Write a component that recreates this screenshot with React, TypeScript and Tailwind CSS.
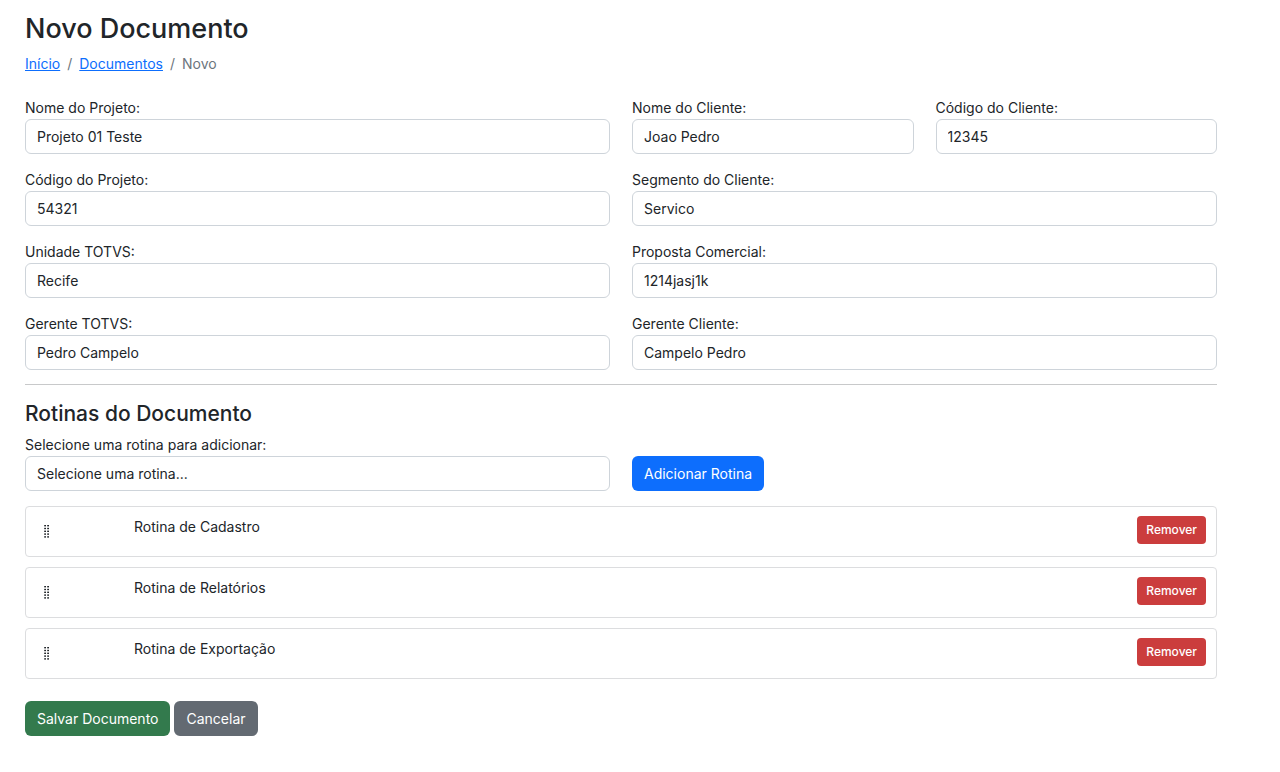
import React, { useState } from 'react';

type Field = {
  id: string;
  label: string;
  value: string;
  span: string;
};

type Routine = {
  id: number;
  name: string;
};

const fields: Field[] = [
  { id: 'projectName', label: 'Nome do Projeto:', value: 'Projeto 01 Teste', span: 'col-span-2' },
  { id: 'clientName', label: 'Nome do Cliente:', value: 'Joao Pedro', span: 'col-span-1' },
  { id: 'clientCode', label: 'Código do Cliente:', value: '12345', span: 'col-span-1' },
  { id: 'projectCode', label: 'Código do Projeto:', value: '54321', span: 'col-span-2' },
  { id: 'clientSegment', label: 'Segmento do Cliente:', value: 'Servico', span: 'col-span-2' },
  { id: 'unit', label: 'Unidade TOTVS:', value: 'Recife', span: 'col-span-2' },
  { id: 'proposal', label: 'Proposta Comercial:', value: '1214jasj1k', span: 'col-span-2' },
  { id: 'totvsManager', label: 'Gerente TOTVS:', value: 'Pedro Campelo', span: 'col-span-2' },
  { id: 'clientManager', label: 'Gerente Cliente:', value: 'Campelo Pedro', span: 'col-span-2' },
];

const initialRoutines: Routine[] = [
  { id: 1, name: 'Rotina de Cadastro' },
  { id: 2, name: 'Rotina de Relatórios' },
  { id: 3, name: 'Rotina de Exportação' },
];

const controlClass = 'block w-full h-[35px] px-[11px] rounded-md border border-[#ced4da] bg-white text-[#212529]';

function TextField({ field }: { field: Field }) {
  return (
    <div className={field.span}>
      <label htmlFor={field.id} className="block">{field.label}</label>
      <input id={field.id} type="text" defaultValue={field.value} className={controlClass} />
    </div>
  );
}

function DragHandle() {
  return (
    <svg width="6" height="14" viewBox="0 0 6 14" fill="#212529" aria-hidden="true">
      {[0, 2.8, 5.6, 8.4, 11.2].map(y => (
        <React.Fragment key={y}>
          <rect x="0.2" y={y} width="1.8" height="1.4" />
          <rect x="3.2" y={y} width="1.8" height="1.4" />
        </React.Fragment>
      ))}
    </svg>
  );
}

function App() {
  const [routines, setRoutines] = useState<Routine[]>(initialRoutines);
  const [selected, setSelected] = useState('');

  const addRoutine = () => {
    const routine = initialRoutines.find(r => String(r.id) === selected);
    if (!routine || routines.some(r => r.id === routine.id)) return;
    setRoutines([...routines, routine]);
  };

  const removeRoutine = (id: number) => {
    setRoutines(routines.filter(r => r.id !== id));
  };

  return (
    <main className="pt-3 pb-9 pl-[25px] pr-[63px] bg-white text-[#212529] text-[14px] leading-[22px] font-['Inter',sans-serif]">
      <h1 className="text-[27px] leading-[34px] font-medium">Novo Documento</h1>
      <nav aria-label="breadcrumb" className="mt-[7px] mb-[22px]">
        <ol className="flex gap-[7px] text-[#6c757d]">
          <li><a href="#inicio" className="text-[#0d6efd] underline">Início</a></li>
          <li aria-hidden="true">/</li>
          <li><a href="#documentos" className="text-[#0d6efd] underline">Documentos</a></li>
          <li aria-hidden="true">/</li>
          <li aria-current="page">Novo</li>
        </ol>
      </nav>

      <form onSubmit={e => e.preventDefault()}>
        <div className="grid grid-cols-4 gap-x-[22px] gap-y-[15px]">
          {fields.map(field => (
            <TextField key={field.id} field={field} />
          ))}
        </div>

        <hr className="mt-[14px] mb-[15px] border-[#c8c9ca]" />

        <h2 className="mb-[7px] text-[21px] leading-[27px] font-medium">Rotinas do Documento</h2>
        <div className="grid grid-cols-2 items-end gap-x-[22px]">
          <div>
            <label htmlFor="routine" className="block">Selecione uma rotina para adicionar:</label>
            <select
              id="routine"
              value={selected}
              onChange={e => setSelected(e.target.value)}
              className={`${controlClass} appearance-none`}
            >
              <option value="">Selecione uma rotina...</option>
              {initialRoutines.map(r => (
                <option key={r.id} value={r.id}>{r.name}</option>
              ))}
            </select>
          </div>
          <div>
            <button
              type="button"
              onClick={addRoutine}
              className="block h-[35px] px-3 rounded-md bg-[#0d6efd] text-white"
            >
              Adicionar Rotina
            </button>
          </div>
        </div>

        <ul className="mt-[15px] flex flex-col gap-[10px]">
          {routines.map(routine => (
            <li
              key={routine.id}
              className="flex items-start h-[51px] pt-[9px] pl-[18px] pr-[10px] rounded border border-[#dcdddf]"
            >
              <div className="w-[90px] pt-[9px] cursor-move">
                <DragHandle />
              </div>
              <span className="flex-1">{routine.name}</span>
              <button
                type="button"
                onClick={() => removeRoutine(routine.id)}
                className="h-7 px-[9px] rounded bg-[#cb3d3d] text-white text-[12px] font-medium"
              >
                Remover
              </button>
            </li>
          ))}
        </ul>

        <div className="mt-[22px] flex gap-1">
          <button type="submit" className="h-[35px] px-3 rounded-md bg-[#337a4d] text-white">Salvar Documento</button>
          <button type="button" className="h-[35px] px-3 rounded-md bg-[#636a72] text-white">Cancelar</button>
        </div>
      </form>
    </main>
  );
}

export default App;
